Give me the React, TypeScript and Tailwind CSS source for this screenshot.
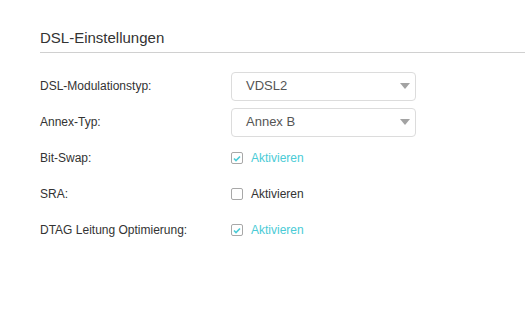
import React from "react";

const Select = ({ value }: { value: string }) => {
  return (
    <div className="flex items-center justify-between w-[185px] h-[29px] border border-[#dcdcdc] rounded-[4px] bg-white pl-[14px] pr-[5px]">
      <span className="text-[13px] text-[#555]">{value}</span>
      <svg width="10" height="6" viewBox="0 0 10 6">
        <polygon points="0,0 10,0 5,6" fill="#a3a3a3" />
      </svg>
    </div>
  );
};

const Check = ({ checked }: { checked: boolean }) => {
  return (
    <div className="flex items-center gap-[8px]">
      <div className="flex items-center justify-center w-[12px] h-[12px] border border-[#a8a8a8] rounded-[2px] bg-white">
        {checked && (
          <svg width="8" height="7" viewBox="0 0 8 7">
            <polyline points="1,3.5 3,5.5 7,1.5" fill="none" stroke="#4acbd6" strokeWidth="1.6" />
          </svg>
        )}
      </div>
      <span className={"text-[12px] " + (checked ? "text-[#4acbd6]" : "text-[#333]")}>Aktivieren</span>
    </div>
  );
};

const Row = ({ label, children }: { label: string; children: React.ReactNode }) => {
  return (
    <div className="flex items-center h-9">
      <div className="w-[191px] text-[12px] text-[#333]">{label}</div>
      {children}
    </div>
  );
};

export default function App() {
  return (
    <div className="w-[525px] h-[315px] bg-white pl-10 pt-[28px]" style={{ fontFamily: '"Liberation Sans", Arial, sans-serif' }}>
      <h2 className="text-[15px] leading-[20px] text-[#333] pb-[4px] border-b border-[#d0d0d0]">
        DSL-Einstellungen
      </h2>
      <div className="mt-[15px]">
        <Row label="DSL-Modulationstyp:">
          <Select value="VDSL2" />
        </Row>
        <Row label="Annex-Typ:">
          <Select value="Annex B" />
        </Row>
        <Row label="Bit-Swap:">
          <Check checked={true} />
        </Row>
        <Row label="SRA:">
          <Check checked={false} />
        </Row>
        <Row label="DTAG Leitung Optimierung:">
          <Check checked={true} />
        </Row>
      </div>
    </div>
  );
}
